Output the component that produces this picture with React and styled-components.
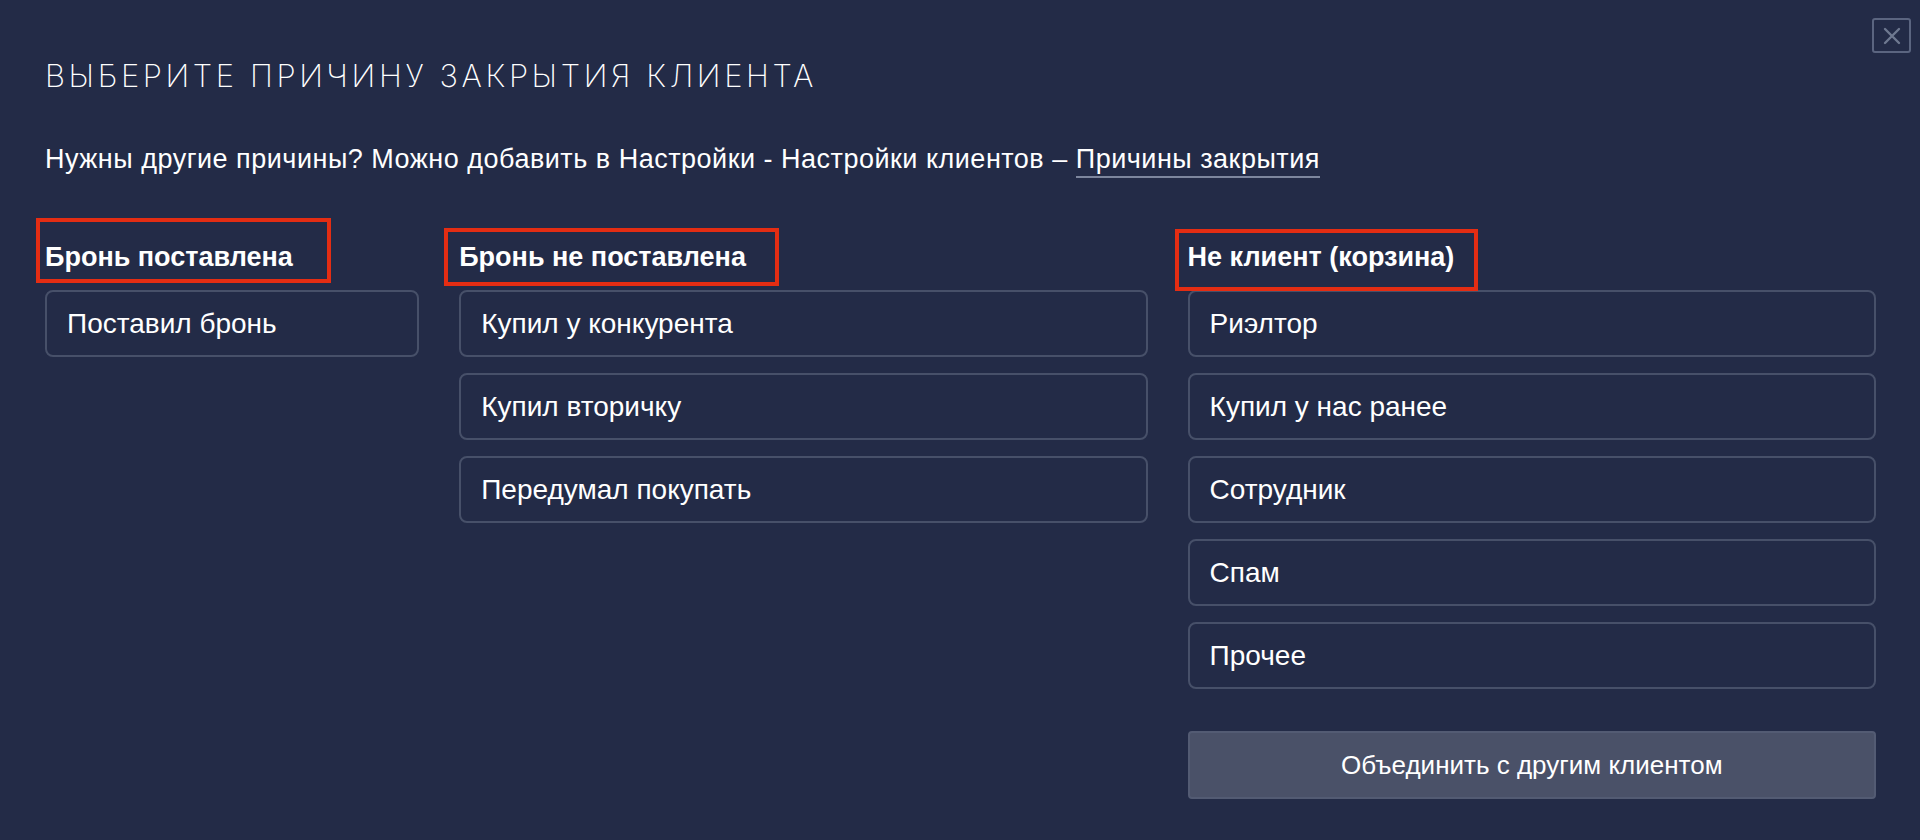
import React from "react";
import styled, { createGlobalStyle } from "styled-components";

const Global = createGlobalStyle`
  html, body {
    margin: 0;
    padding: 0;
    background: #232b47;
    height: 100%;
  }
  * { box-sizing: border-box; }
`;

const Dialog = styled.div`
  position: relative;
  min-height: 840px;
  background: #232b47;
  color: #ffffff;
  padding: 58px 44px 0 45px;
  font-family: "Liberation Sans", Arial, sans-serif;
`;

const CloseButton = styled.button`
  position: absolute;
  top: 18px;
  right: 9px;
  width: 39px;
  height: 35px;
  border: 2px solid #5b6580;
  border-radius: 3px;
  background: transparent;
  display: flex;
  align-items: center;
  justify-content: center;
  padding: 0;
  cursor: pointer;
`;

const Title = styled.h1`
  margin: 0;
  font-family: Inter, Roboto, "Liberation Sans", sans-serif;
  font-weight: 200;
  font-size: 31px;
  line-height: 36px;
  letter-spacing: 3.6px;
  text-transform: uppercase;
  color: #ffffff;
`;

const Hint = styled.p`
  margin: 50px 0 0;
  font-size: 27px;
  line-height: 30px;
  letter-spacing: 0.5px;
  color: #ffffff;
`;

const HintLink = styled.a`
  color: #ffffff;
  text-decoration: none;
  border-bottom: 2px solid #7d869d;
  padding-bottom: 2px;
`;

const Columns = styled.div`
  display: grid;
  grid-template-columns: 374fr 688fr 688fr;
  column-gap: 40px;
  margin-top: 68px;
  align-items: start;
`;

const Column = styled.div`
  display: flex;
  flex-direction: column;
`;

const HeaderRow = styled.div`
  height: 30px;
  margin-bottom: 18px;
`;

const Heading = styled.span`
  position: relative;
  display: inline-block;
  font-weight: 700;
  font-size: 27px;
  line-height: 30px;
  color: #ffffff;
`;

const Mark = styled.span`
  position: absolute;
  top: ${(p) => p.$t}px;
  right: ${(p) => p.$r}px;
  bottom: ${(p) => p.$b}px;
  left: ${(p) => p.$l}px;
  border: 4px solid #e42d13;
  pointer-events: none;
`;

const List = styled.div`
  display: flex;
  flex-direction: column;
  gap: 16px;
`;

const Reason = styled.button`
  height: 67px;
  width: 100%;
  display: flex;
  align-items: center;
  padding: 0 20px;
  background: transparent;
  border: 2px solid #475069;
  border-radius: 8px;
  color: #ffffff;
  font-family: "Liberation Sans", Arial, sans-serif;
  font-size: 28px;
  text-align: left;
  cursor: pointer;
`;

const MergeButton = styled.button`
  margin-top: 42px;
  height: 68px;
  width: 100%;
  background: #4a5168;
  border: 2px solid #535b73;
  border-radius: 4px;
  color: #ffffff;
  font-family: "Liberation Sans", Arial, sans-serif;
  font-size: 26px;
  cursor: pointer;
`;

const groups = [
  {
    title: "Бронь поставлена",
    mark: { t: -24, r: -38, b: -11, l: -9 },
    items: ["Поставил бронь"],
  },
  {
    title: "Бронь не поставлена",
    mark: { t: -14, r: -33, b: -14, l: -15 },
    items: ["Купил у конкурента", "Купил вторичку", "Передумал покупать"],
  },
  {
    title: "Не клиент (корзина)",
    mark: { t: -13, r: -24, b: -19, l: -13 },
    items: ["Риэлтор", "Купил у нас ранее", "Сотрудник", "Спам", "Прочее"],
    merge: true,
  },
];

export default function App() {
  return (
    <>
      <Global />
      <Dialog>
        <CloseButton aria-label="Закрыть">
          <svg width="18" height="18" viewBox="0 0 18 18">
            <path d="M2 2 L16 16 M16 2 L2 16" stroke="#6e7890" strokeWidth="2.4" strokeLinecap="round" />
          </svg>
        </CloseButton>
        <Title>Выберите причину закрытия клиента</Title>
        <Hint>
          Нужны другие причины? Можно добавить в Настройки - Настройки клиентов –{" "}
          <HintLink href="#">Причины закрытия</HintLink>
        </Hint>
        <Columns>
          {groups.map((g) => (
            <Column key={g.title}>
              <HeaderRow>
                <Heading>
                  {g.title}
                  <Mark $t={g.mark.t} $r={g.mark.r} $b={g.mark.b} $l={g.mark.l} />
                </Heading>
              </HeaderRow>
              <List>
                {g.items.map((it) => (
                  <Reason key={it}>{it}</Reason>
                ))}
              </List>
              {g.merge && <MergeButton>Объединить с другим клиентом</MergeButton>}
            </Column>
          ))}
        </Columns>
      </Dialog>
    </>
  );
}
